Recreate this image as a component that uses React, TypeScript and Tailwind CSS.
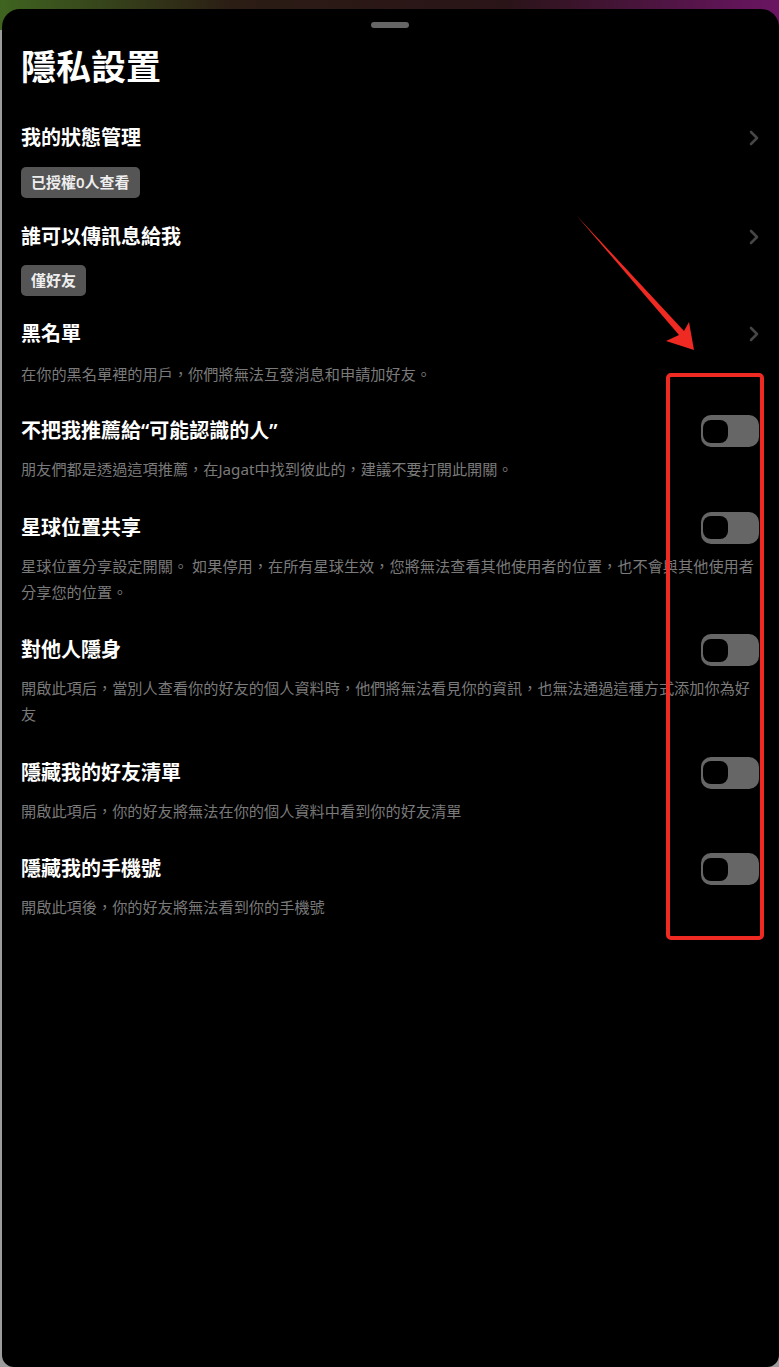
import React from 'react';

const font = { fontFamily: '"Noto Sans", "Noto Sans CJK TC", sans-serif' };

type LinkItem = { title: string; badge?: string; desc?: string };
type ToggleItem = { title: string; desc: string };

const toggleItems: ToggleItem[] = [
  {
    title: '不把我推薦給“可能認識的人”',
    desc: '朋友們都是透過這項推薦，在Jagat中找到彼此的，建議不要打開此開關。',
  },
  {
    title: '星球位置共享',
    desc: '星球位置分享設定開關。 如果停用，在所有星球生效，您將無法查看其他使用者的位置，也不會與其他使用者分享您的位置。',
  },
  {
    title: '對他人隱身',
    desc: '開啟此項后，當別人查看你的好友的個人資料時，他們將無法看見你的資訊，也無法通過這種方式添加你為好友',
  },
  {
    title: '隱藏我的好友清單',
    desc: '開啟此項后，你的好友將無法在你的個人資料中看到你的好友清單',
  },
  {
    title: '隱藏我的手機號',
    desc: '開啟此項後，你的好友將無法看到你的手機號',
  },
];

function Chevron() {
  return (
    <svg width="10" height="16" viewBox="0 0 10 16" fill="none">
      <path d="M2 2l6 6-6 6" stroke="#464646" strokeWidth="2.6" strokeLinecap="round" strokeLinejoin="round" />
    </svg>
  );
}

function Toggle() {
  return (
    <div className="flex h-[32px] w-[58px] items-center rounded-[10px] bg-[#666666]">
      <div className="ml-[2px] h-[23px] w-[25px] rounded-[8px] bg-black" />
    </div>
  );
}

function LinkRow({ item }: { item: LinkItem }) {
  return (
    <div className="flex h-[32px] items-center justify-between">
      <div className="text-[20px] font-semibold text-white">{item.title}</div>
      <Chevron />
    </div>
  );
}

function Badge({ text }: { text: string }) {
  return (
    <div className="inline-flex h-[31px] items-center rounded-[5px] bg-[#555555] px-[10px] text-[15px] font-semibold text-[#eeeeee]">
      {text}
    </div>
  );
}

export default function App() {
  return (
    <div
      className="relative h-[1367px] w-full overflow-hidden pl-[2px] pt-[9px] [background:linear-gradient(to_right,#3f6420,#2b1c14_30%,#2a1418_65%,#6a1562)_top/100%_30px_no-repeat,#9c9c9c]"
      style={font}
    >
      <div className="flex h-[1358px] flex-col rounded-t-[18px] rounded-b-[12px] bg-black pl-[19px] pr-[20px]">
        {/* handle */}
        <div className="mx-auto mt-[13px] h-[6px] w-[38px] rounded-full bg-[#666666]" />

        <h1 className="mt-[18px] text-[35px] font-bold leading-[42px] text-white">隱私設置</h1>

        <div className="mt-[34px]">
          <LinkRow item={{ title: '我的狀態管理' }} />
          <div className="mt-[13px]">
            <Badge text="已授權0人查看" />
          </div>
        </div>

        <div className="mt-[23px]">
          <LinkRow item={{ title: '誰可以傳訊息給我' }} />
          <div className="mt-[12px]">
            <Badge text="僅好友" />
          </div>
        </div>

        <div className="mt-[22px]">
          <LinkRow item={{ title: '黑名單' }} />
          <div className="mt-[11px] text-[15.2px] leading-[26px] text-[#7a7a7a]">
            在你的黑名單裡的用戶，你們將無法互發消息和申請加好友。
          </div>
        </div>

        <div className="mt-[28px] flex flex-col gap-[29.5px]">
          {toggleItems.map((item) => (
            <div key={item.title}>
              <div className="flex h-[32px] items-center justify-between">
                <div className="text-[20px] font-semibold text-white">{item.title}</div>
                <Toggle />
              </div>
              <div className="mt-[9px] text-[15.2px] leading-[26px] text-[#7a7a7a]">{item.desc}</div>
            </div>
          ))}
        </div>
      </div>

      {/* red annotation overlay */}
      <svg className="pointer-events-none absolute inset-0" width="779" height="1367" viewBox="0 0 779 1367">
        <polygon points="577,216 684,331 689,322 694,350 666,341 679,335" fill="#ee2a22" />
        <rect x="668" y="375" width="94" height="563" rx="3" fill="none" stroke="#ee2a22" strokeWidth="4" />
      </svg>
    </div>
  );
}
